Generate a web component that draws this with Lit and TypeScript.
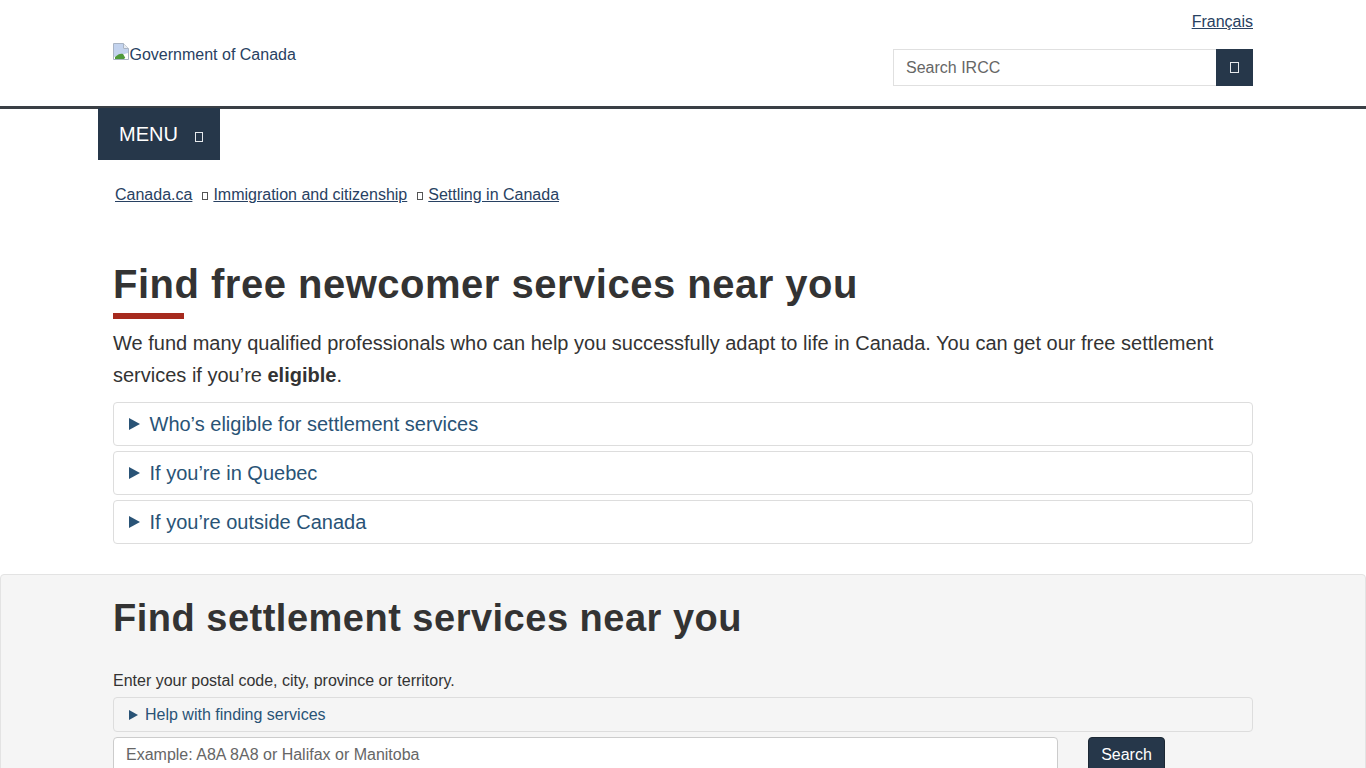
import { LitElement, html, css } from "lit";
import { customElement } from "lit/decorators.js";

@customElement("app-root")
export class AppRoot extends LitElement {
  static styles = css`
    :host { display: block; font-family: "Liberation Sans", Arial, sans-serif; color: #333; background: #fff; height: 768px; overflow: hidden; }
    * { box-sizing: border-box; }
    a { color: #284162; text-decoration: underline; }
    .wrap { width: 1140px; margin: 0 auto; }
    header { height: 109px; border-bottom: 3px solid #3a3f45; }
    .hrow { display: flex; justify-content: space-between; position: relative; }
    .logo { display: flex; align-items: flex-start; margin-top: 43px; font-size: 16px; line-height: 22px; color: #284162; }
    .logo svg { display: block; flex: none; margin-right: 0.5px; }
    .logo span { margin-top: 1px; }
    .right { display: flex; flex-direction: column; align-items: flex-end; }
    .lang { font-size: 16px; line-height: 22px; margin-top: 11px; }
    .search { display: flex; width: 360px; height: 37px; margin-top: 16px; }
    .search .input { flex: 1; border: 1px solid #e0e0e0; border-right: none; font-size: 16px; line-height: 35px; padding-left: 12px; color: #666; }
    .search .btn { width: 37px; background: #26374a; display: flex; align-items: center; justify-content: center; }
    .tofu { display: inline-block; border: 1px solid #e6e9ec; flex: none; }
    .t1 { width: 9px; height: 11px; }
    .t2 { width: 8px; height: 10px; }
    .t3 { width: 6px; height: 8px; border-color: #555; }
    .menu { margin-left: 98px; margin-top: -1px; width: 122px; height: 52px; background: #26374a; color: #fff; font-size: 20px; display: flex; align-items: center; padding: 0 0 0 21px; position: relative; }
    .menu .tofu { margin-left: 17px; margin-top: 6px; }
    .crumbs { display: flex; align-items: center; font-size: 16px; line-height: 22px; padding-left: 2px; margin-top: 24px; }
    .crumbs .tofu { margin: 2px 5px 0 10px; }
    h1 { font-size: 40px; line-height: 42px; font-weight: 700; margin: 57px 0 0; color: #333; letter-spacing: 0.5px; }
    .rule { width: 71px; height: 6px; background: #a62a1e; margin-top: 8px; }
    p { margin: 8px 0 0; font-size: 20px; line-height: 32px; }
    .det { border: 1px solid #ddd; border-radius: 4px; height: 44px; margin-top: 5px; display: flex; align-items: center; padding-left: 15px; color: #295376; font-size: 20px; }
    p + .det { margin-top: 11px; }
    .tri { width: 0; height: 0; border-left: 11px solid #295376; border-top: 6.5px solid transparent; border-bottom: 6.5px solid transparent; margin-right: 9.5px; }
    .well { margin-top: 30px; background: #f5f5f5; border: 1px solid #e3e3e3; border-radius: 4px; height: 300px; }
    h2 { font-size: 38px; line-height: 42px; font-weight: 700; margin: 22px 0 0; letter-spacing: 0.5px; color: #333; }
    .lab { font-size: 16px; line-height: 22px; margin-top: 31px; }
    .help { border: 1px solid #ddd; border-radius: 4px; height: 35px; margin-top: 5px; display: flex; align-items: center; padding-left: 15px; color: #295376; font-size: 16px; }
    .help .tri { border-left-width: 9px; border-top-width: 5px; border-bottom-width: 5px; margin-right: 7px; }
    .frow { display: flex; margin-top: 5px; }
    .field { width: 945px; height: 46px; background: #fff; border: 1px solid #ccc; border-radius: 4px; padding-left: 12px; font-size: 16px; line-height: 34px; color: #666; }
    .go { margin-left: 30px; width: 77px; height: 36px; background: #26374a; color: #fff; border: 1px solid #1c2834; border-radius: 4px; font-size: 16px; display: flex; align-items: center; justify-content: center; }
  `;

  render() {
    return html`
      <header>
        <div class="wrap hrow">
          <div class="logo">
            <svg width="16" height="17" viewBox="0 0 16 17">
              <path d="M.5.5h10l5 5v11H.5z" fill="#fff" stroke="#a9b4c4"/>
              <path d="M10.5.5v5h5" fill="#e8ecf2" stroke="#a9b4c4"/>
              <path d="M1 1h9v5h5v4L1 14z" fill="#c3d3ee"/>
              <path d="M2 16v-2c3-3 6-4 8-3l3 5z" fill="#4f9a3c"/>
              <path d="M11 16l4-4v4z" fill="#fff"/>
            </svg>
            <span>Government of Canada</span>
          </div>
          <div class="right">
            <a class="lang" href="#">Français</a>
            <div class="search">
              <div class="input">Search IRCC</div>
              <div class="btn"><span class="tofu t1"></span></div>
            </div>
          </div>
        </div>
      </header>
      <div class="menu">MENU<span class="tofu t2"></span></div>
      <main>
        <div class="wrap">
          <div class="crumbs">
            <a href="#">Canada.ca</a><span class="tofu t3"></span>
            <a href="#">Immigration and citizenship</a><span class="tofu t3"></span>
            <a href="#">Settling in Canada</a>
          </div>
          <h1>Find free newcomer services near you</h1>
          <div class="rule"></div>
          <p>We fund many qualified professionals who can help you successfully adapt to life in Canada. You can get our free settlement services if you’re <b>eligible</b>.</p>
          <div class="det"><span class="tri"></span>Who’s eligible for settlement services</div>
          <div class="det"><span class="tri"></span>If you’re in Quebec</div>
          <div class="det"><span class="tri"></span>If you’re outside Canada</div>
        </div>
        <section class="well">
          <div class="wrap">
            <h2>Find settlement services near you</h2>
            <div class="lab">Enter your postal code, city, province or territory.</div>
            <div class="help"><span class="tri"></span>Help with finding services</div>
            <div class="frow">
              <div class="field">Example: A8A 8A8 or Halifax or Manitoba</div>
              <div class="go">Search</div>
            </div>
          </div>
        </section>
      </main>
    `;
  }
}
